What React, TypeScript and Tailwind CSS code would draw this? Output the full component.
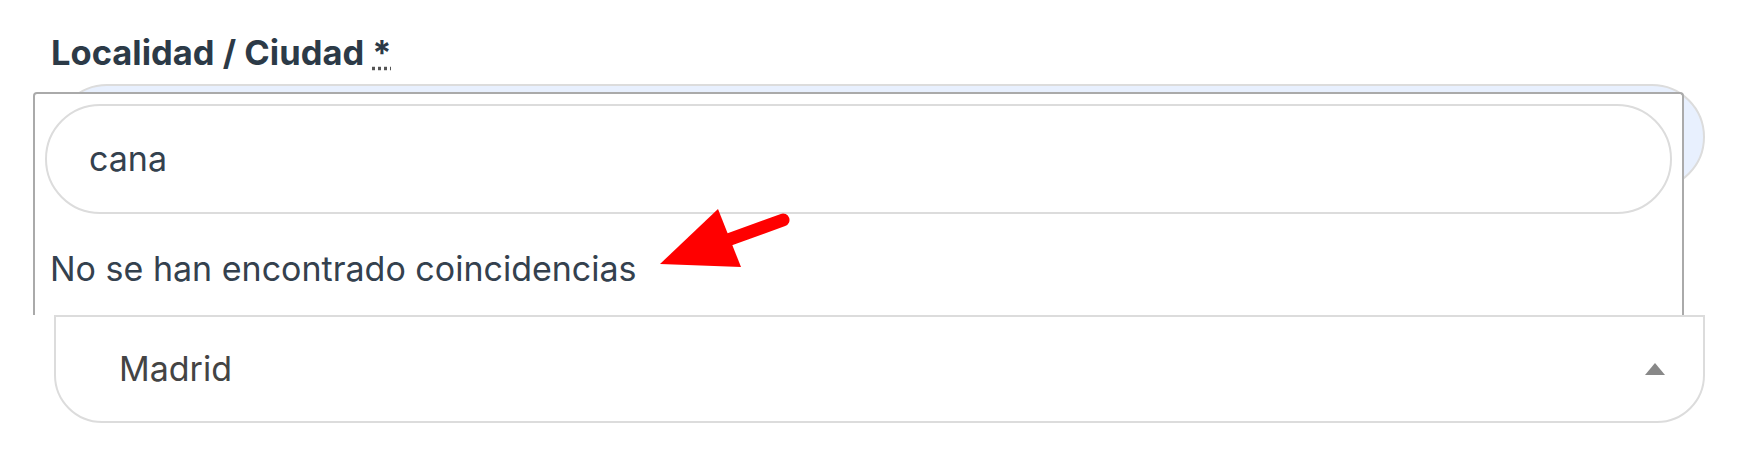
import React from "react";

export default function App() {
  return (
    <div
      className="relative h-[465px] w-full overflow-hidden bg-white"
      style={{ fontFamily: "Inter, 'Noto Sans', sans-serif" }}
    >
      <div className="ml-[54px] w-[1651px] pt-[33px]">
        <label className="-ml-[3px] block text-[34.5px] leading-[40px] font-bold text-[#2c3a47]">
          Localidad / Ciudad{" "}
          <abbr className="underline decoration-dotted decoration-[#555]" title="obligatorio">
            *
          </abbr>
        </label>
        <div className="mt-[11px] h-[106px] rounded-full border-2 border-[#dcdcdc] bg-[#e8f0fe]" />
        <div className="mt-[125px] flex h-[108px] items-center justify-between rounded-b-[48px] border-2 border-[#dcdcdc] bg-white pl-[63px] pr-[38px]">
          <span className="text-[34px] leading-[40px] text-[#444]">Madrid</span>
          <span className="h-0 w-0 border-x-[10px] border-b-[12px] border-x-transparent border-b-[#888]" />
        </div>
      </div>

      <div className="absolute left-[33px] top-[92px] h-[223px] w-[1651px] rounded-t-[4px] border-2 border-b-0 border-[#aaa] bg-white">
        <div className="px-[10px] pt-[10px]">
          <div className="flex h-[110px] items-center rounded-full border-2 border-[#dcdcdc] bg-white pl-[42px]">
            <span className="text-[34px] leading-[40px] text-[#34414e]">cana</span>
          </div>
        </div>
        <div className="mt-[35px] pl-[15px] text-[34px] leading-[40px] text-[#34414e]">
          No se han encontrado coincidencias
        </div>
      </div>

      <svg
        className="pointer-events-none absolute left-0 top-0"
        width="1752"
        height="465"
        viewBox="0 0 1752 465"
      >
        <line x1="783" y1="220" x2="725" y2="241" stroke="#ff0000" strokeWidth="13" strokeLinecap="round" />
        <polygon points="660,264 718,209 741,267" fill="#ff0000" />
      </svg>
    </div>
  );
}
